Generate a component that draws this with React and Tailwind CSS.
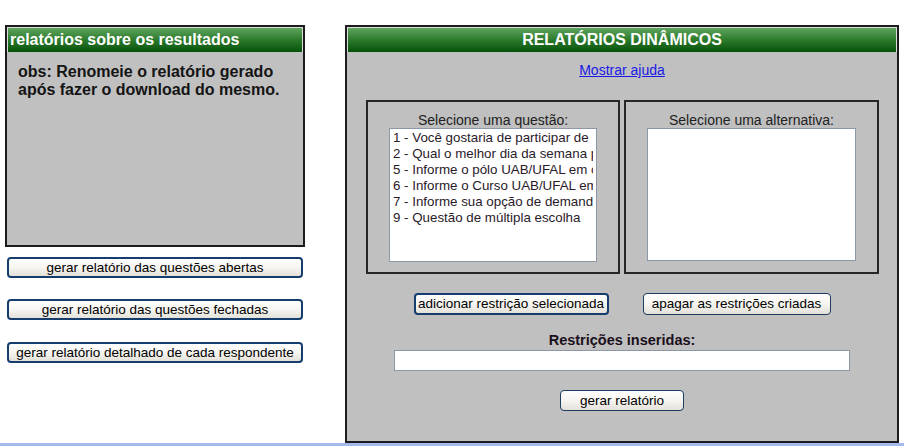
import React from "react";

const questoes = [
  "1 - Você gostaria de participar de",
  "2 - Qual o melhor dia da semana p",
  "5 - Informe o pólo UAB/UFAL em c",
  "6 - Informe o Curso UAB/UFAL em",
  "7 - Informe sua opção de demanda",
  "9 - Questão de múltipla escolha",
];

const leftButtons = [
  { label: "gerar relatório das questões abertas", mt: "mt-[10px]" },
  { label: "gerar relatório das questões fechadas", mt: "mt-[21px]" },
  { label: "gerar relatório detalhado de cada respondente", mt: "mt-[22px]" },
];

const Header = ({ children, center }) => (
  <div
    className={`h-[25px] border border-b-0 border-[#dcdcdc] bg-linear-to-b from-[#5fa55f] via-[#2b7a2b] to-[#05520a] text-white font-bold text-[16px] leading-[24px] ${
      center ? "text-center" : "pl-[2px]"
    }`}
  >
    {children}
  </div>
);

const XpButton = ({ children, className = "", thick }) => (
  <button
    className={`h-[21px] rounded-[4px] bg-linear-to-b from-white via-[#f6f5f1] to-[#e3e1d8] text-[13.5px] leading-none text-black ${
      thick ? "border-2 border-[#153e6e]" : "border border-[#1d3c62]"
    } ${className}`}
  >
    {children}
  </button>
);

export default function App() {
  return (
    <div
      className="w-[904px] h-[446px] bg-white overflow-hidden pt-[25px]"
      style={{ fontFamily: '"Liberation Sans", Arial, sans-serif' }}
    >
      <div className="flex items-start h-[418px]">
        {/* coluna esquerda */}
        <div className="ml-[5px] w-[300px]">
          <div className="h-[222px] border-2 border-[#1c1c1c] bg-[#c0c0c0]">
            <Header>relatórios sobre os resultados</Header>
            <p className="mt-[11px] pl-[11px] text-[16px] leading-[18px] font-bold text-[#141414]">
              obs: Renomeie o relatório gerado
              <br />
              após fazer o download do mesmo.
            </p>
          </div>
          {leftButtons.map((b) => (
            <XpButton key={b.label} thick className={`${b.mt} ml-[2px] w-[296px] block`}>
              {b.label}
            </XpButton>
          ))}
        </div>

        {/* relatórios dinâmicos */}
        <div className="ml-[40px] w-[554px] h-[418px] border-2 border-[#1c1c1c] bg-[#c0c0c0]">
          <Header center>RELATÓRIOS DINÂMICOS</Header>
          <div className="mt-[10px] text-center text-[14px] leading-[16px]">
            <a href="#" className="text-[#1a1ae6] underline">
              Mostrar ajuda
            </a>
          </div>

          <div className="mt-[22px] flex gap-[4px] pl-[19px]">
            <div className="w-[254px] h-[174px] border-2 border-[#262626]">
              <div className="pt-[10px] text-center text-[14px] leading-[16px] text-[#222]">
                Selecione uma questão:
              </div>
              <div className="ml-[21px] w-[208px] h-[134px] border border-[#8c98a8] bg-white overflow-hidden px-[3px] pt-[1px]">
                {questoes.map((q) => (
                  <div
                    key={q}
                    className="whitespace-nowrap overflow-hidden text-[13.33px] leading-[16px] text-[#2a1a2a]"
                  >
                    {q}
                  </div>
                ))}
              </div>
            </div>
            <div className="w-[255px] h-[174px] border-2 border-[#262626]">
              <div className="pt-[10px] text-center text-[14px] leading-[16px] text-[#222]">
                Selecione uma alternativa:
              </div>
              <div className="ml-[21px] w-[209px] h-[133px] border border-[#8c98a8] bg-white" />
            </div>
          </div>

          <div className="mt-[19px] flex justify-center gap-[34px]">
            <XpButton thick className="w-[195px] h-[22px]">
              adicionar restrição selecionada
            </XpButton>
            <XpButton className="w-[188px] h-[22px]">
              apagar as restrições criadas
            </XpButton>
          </div>

          <div className="mt-[17px] text-center text-[14.5px] leading-[16px] font-bold text-[#1a0f1a]">
            Restrições inseridas:
          </div>
          <div className="mt-[2px] mx-auto w-[456px] h-[21px] border border-[#8c98a8] bg-white" />

          <div className="mt-[19px] flex justify-center">
            <XpButton className="w-[124px]">gerar relatório</XpButton>
          </div>
        </div>
      </div>
      <div className="h-[3px] bg-[#a6b8ec]" />
    </div>
  );
}
